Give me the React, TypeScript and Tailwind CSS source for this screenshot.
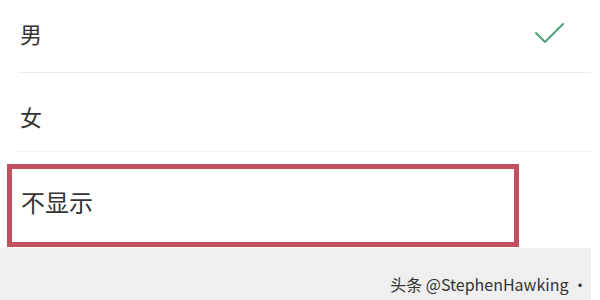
export default function App() {
  const font = { fontFamily: '"Noto Sans CJK SC", "Noto Sans", sans-serif' };

  return (
    <div className="w-[600px] h-[300px] bg-white flex flex-col overflow-hidden" style={font}>
      {/* Option list */}
      <div className="w-[591px] bg-white shrink-0">
        <div className="h-[72px] flex items-center justify-between pl-[20px] pr-[26px] pb-[6px]">
          <span className="text-[22px] text-[#333]">男</span>
          <svg width="30" height="22" viewBox="0 0 30 22" fill="none">
            <path d="M1 11 L10 20 L28 2" stroke="#4fa37a" strokeWidth="2" strokeLinecap="round" strokeLinejoin="round" />
          </svg>
        </div>
        <div className="ml-[18px] h-px bg-[#ececec]" />
        <div className="h-[78px] flex items-center pl-[20px] pt-[8px]">
          <span className="text-[22px] text-[#333]">女</span>
        </div>
        <div className="ml-[18px] h-px bg-[#f0f0f0]" />
        <div className="h-[96px] pt-[12px] pl-[7px]">
          <div className="w-[512px] h-[83px] border-[5px] border-[#c2505e] flex items-center pl-[9px] pb-[8px]">
            <span className="text-[24px] text-[#333]">不显示</span>
          </div>
        </div>
      </div>

      {/* Footer with watermark */}
      <div className="w-[591px] flex-1 bg-[#efefef] flex items-end justify-end pr-[3px] pb-[4px]">
        <span className="text-[16px] text-[#333]">头条 @StephenHawking ·</span>
      </div>
    </div>
  );
}
